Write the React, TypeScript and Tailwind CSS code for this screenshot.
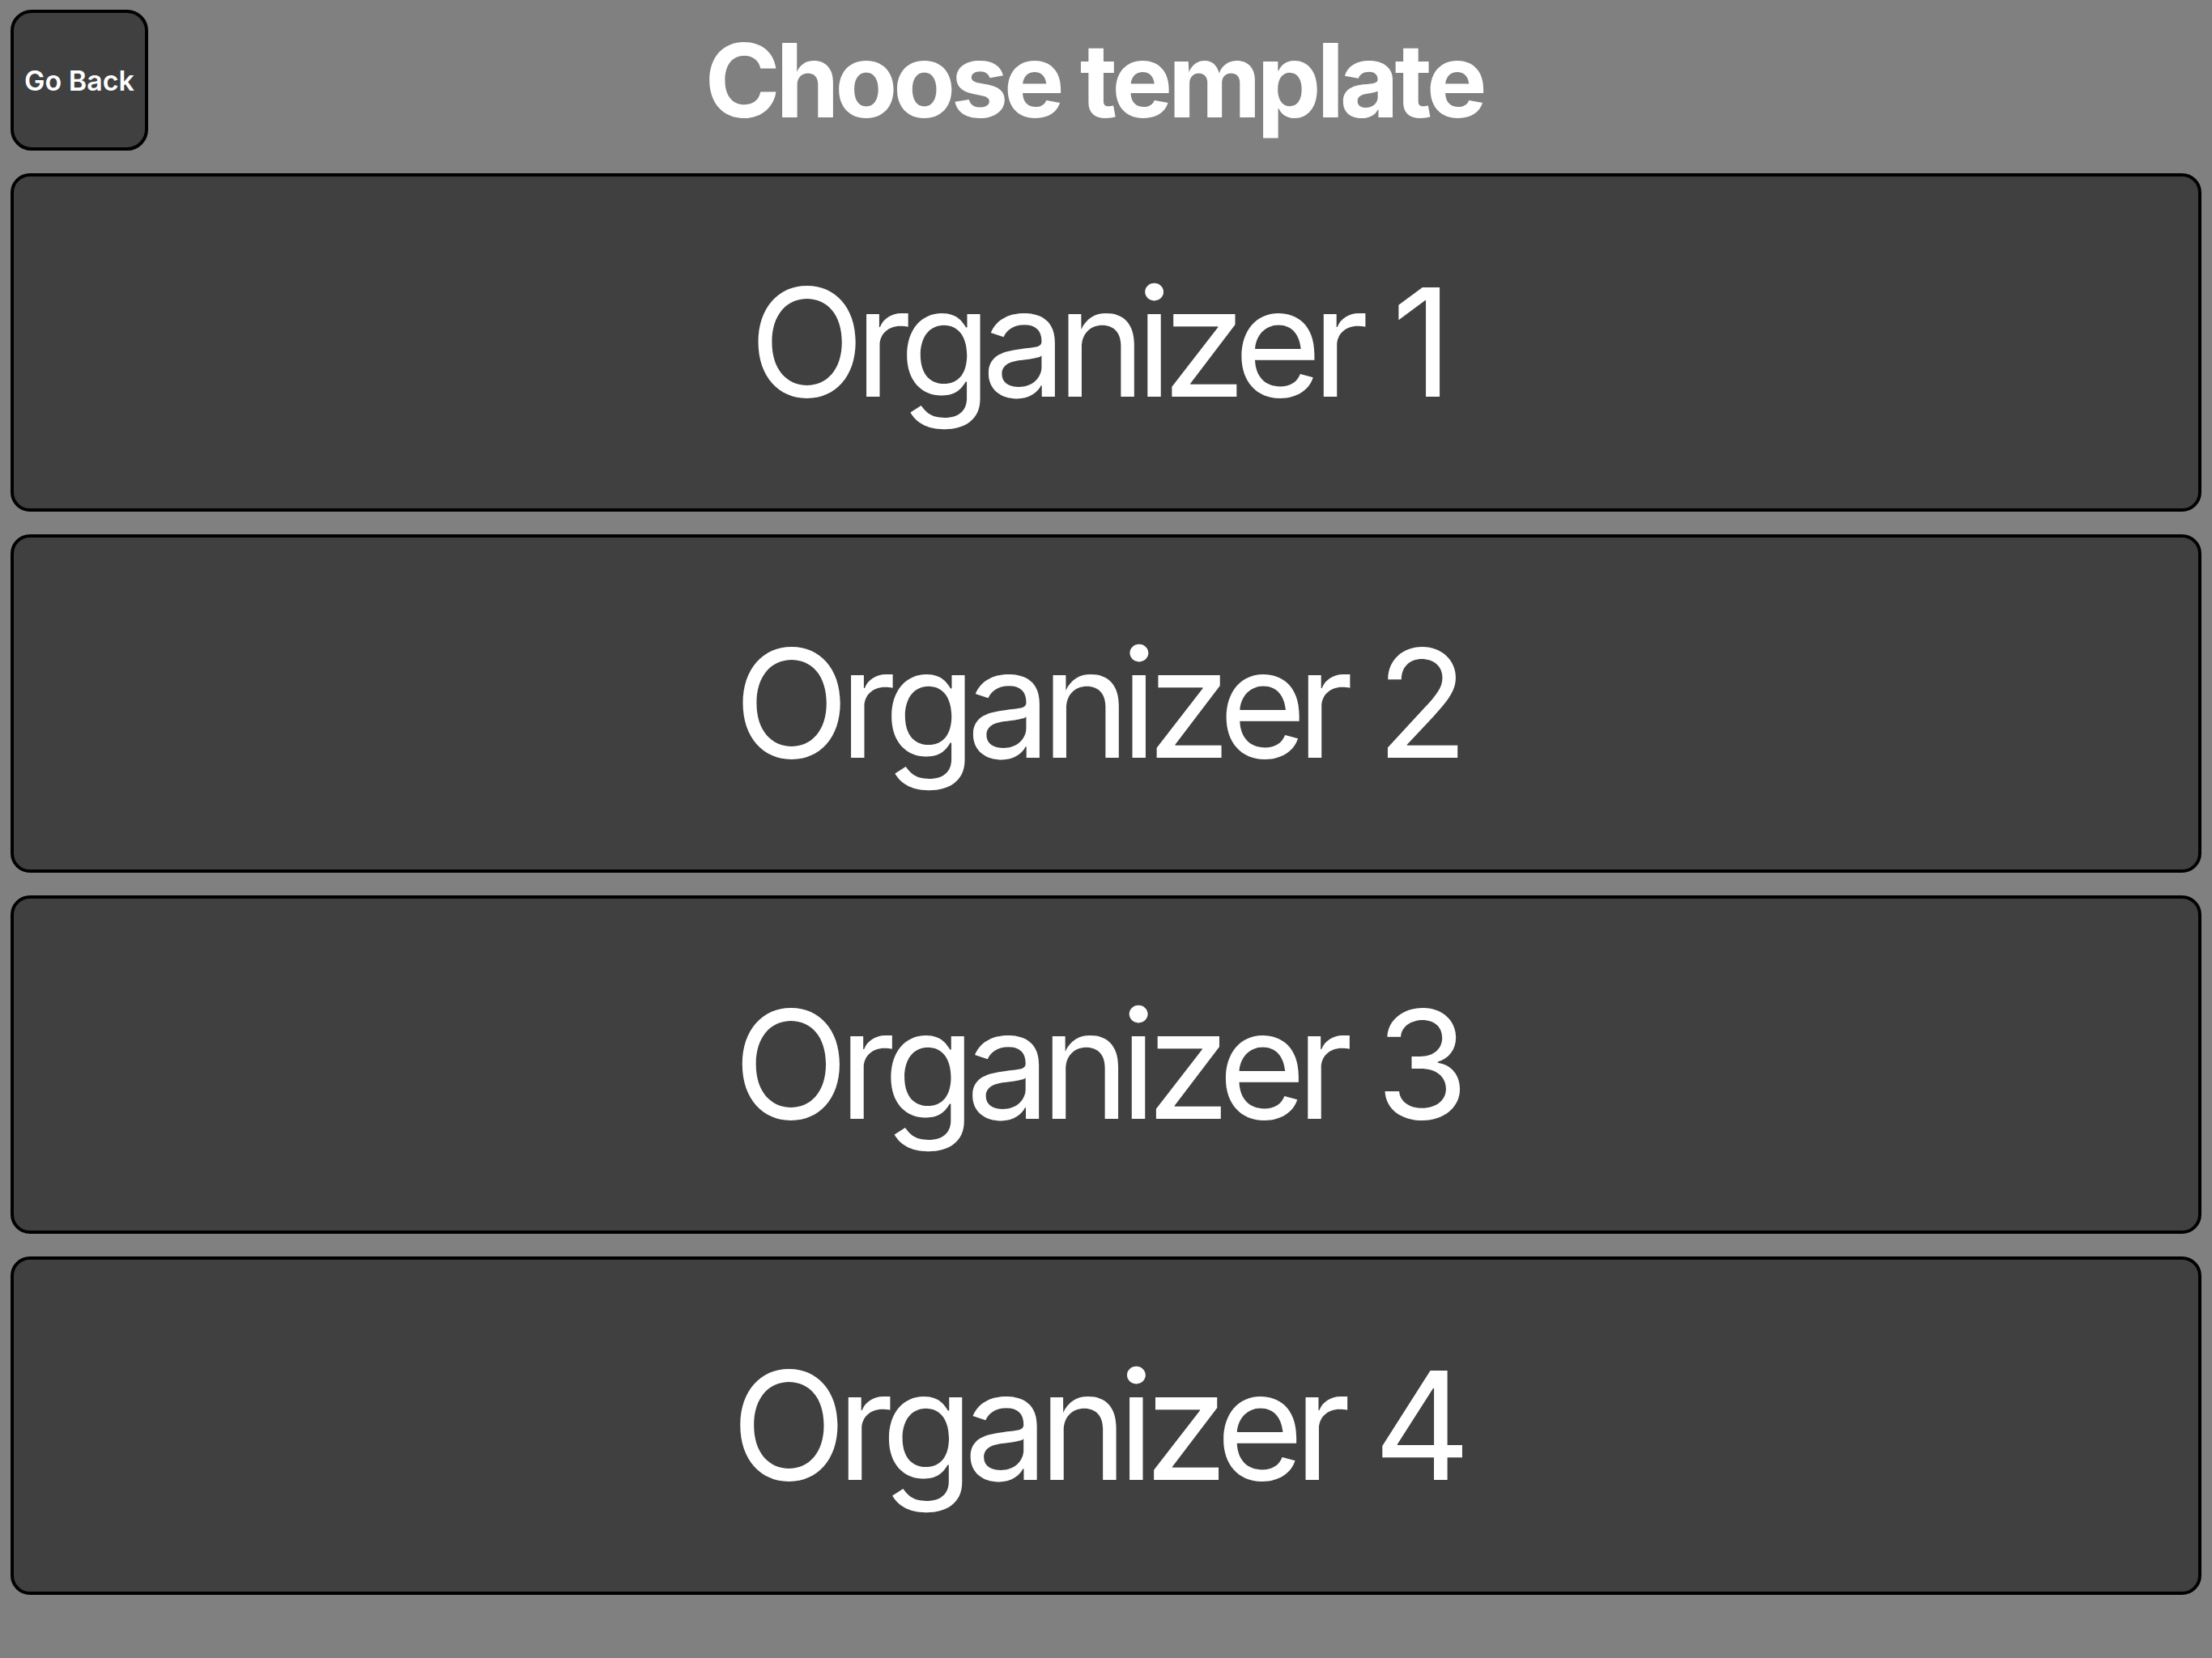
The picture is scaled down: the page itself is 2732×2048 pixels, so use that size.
import React from 'react';

const templates = ['Organizer 1', 'Organizer 2', 'Organizer 3', 'Organizer 4'];

export default function App() {
  return (
    <div
      className="min-h-screen w-full bg-[#808080] px-[13px] pt-[12px] pb-[78px] flex flex-col"
      style={{ fontFamily: 'Inter, "Noto Sans", sans-serif' }}
    >
      {/* header */}
      <div className="grid grid-cols-[170px_1fr_170px] items-center">
        <button className="w-[170px] h-[174px] rounded-[26px] border-[4px] border-black bg-[#404040] text-white text-[34px] font-semibold flex items-center justify-center">
          Go Back
        </button>
        <h1 className="pr-[30px] text-center text-white text-[126px] font-bold leading-none tracking-[-5.5px]">
          Choose template
        </h1>
        <div />
      </div>

      {/* template list */}
      <div className="mt-[28px] flex flex-col gap-[28px]">
        {templates.map((name) => (
          <button
            key={name}
            className="h-[418px] w-full pr-[24px] rounded-[24px] border-[4px] border-black bg-[#404040] text-white text-[186px] font-normal leading-none tracking-[-12px] flex items-center justify-center"
          >
            {name}
          </button>
        ))}
      </div>
    </div>
  );
}
